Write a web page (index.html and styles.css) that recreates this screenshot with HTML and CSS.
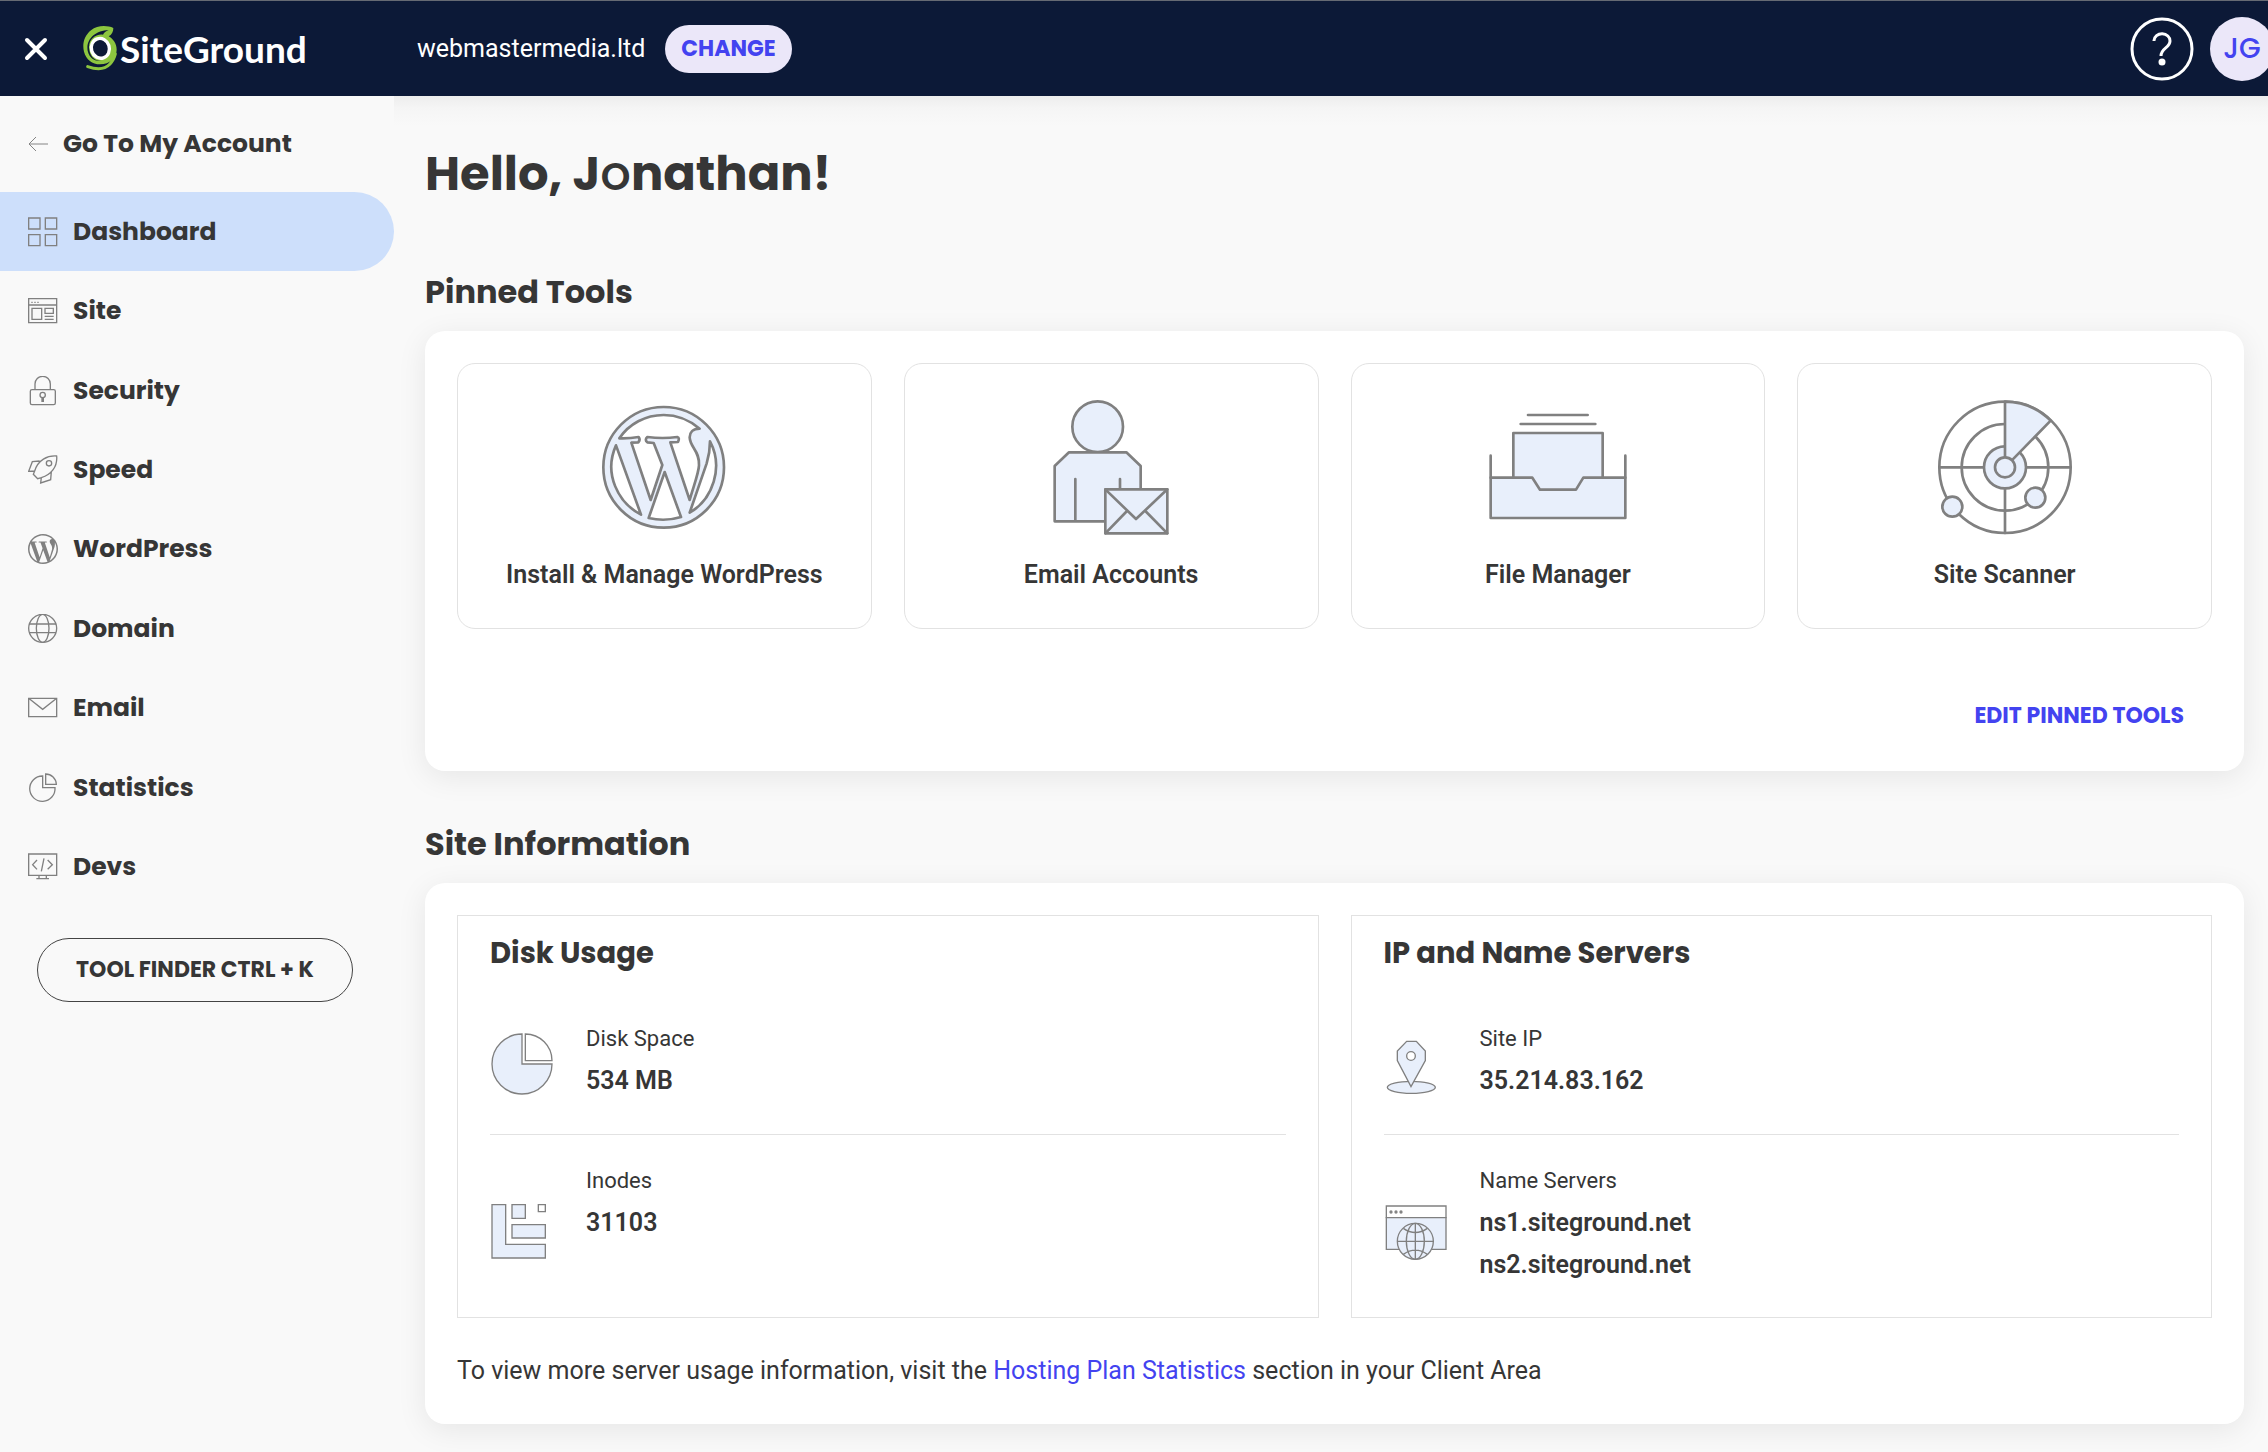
FILE: index.html
```html
<!DOCTYPE html>
<html lang="en">
<head>
<meta charset="utf-8">
<meta name="viewport" content="width=device-width, initial-scale=1">
<title>Dashboard – SiteGround</title>
<link rel="stylesheet" href="styles.css">
</head>
<body>
<header class="topbar">
  <div class="topbar-brand">
    <button class="icon-button close" type="button" aria-label="Close menu">
      <svg width="24" height="24" viewBox="0 0 24 24" fill="none" stroke="#fff" stroke-width="4" stroke-linecap="round"><path d="M3 3 21 21M21 3 3 21"/></svg>
    </button>
    <a class="logo" href="#">
      <svg width="35" height="48" viewBox="249 75 105 144" aria-hidden="true">
        <path fill="#8dc63f" fill-rule="evenodd" d="M340 84C322 76 292 75 273 91C253 107 246 132 252 155C258 179 277 193 300 193C330 193 350 172 350 149C350 130 339 117 326 109C335 104 340 96 340 84ZM326 91C317 94 312 98 309 104C288 101 266 117 267 143C268 167 284 183 304 183C288 185 268 176 263 152C257 119 286 91 326 91Z"/>
        <path fill="none" stroke="#8dc63f" stroke-width="9" stroke-linecap="round" d="M263 200C286 208 312 211 329 193Q342 180 346 162"/>
        <ellipse cx="301" cy="145" rx="27" ry="30" transform="rotate(-18 301 145)" fill="#0c1937" stroke="#fff" stroke-width="10"/>
      </svg>
      <span class="logo-text">SiteGround</span>
    </a>
  </div>
  <div class="topbar-site">
    <span>webmastermedia.ltd</span>
    <button class="change" type="button">CHANGE</button>
  </div>
  <div class="topbar-user">
    <button class="icon-button" type="button" aria-label="Help">
      <svg width="64" height="64" viewBox="0 0 64 64" fill="none" stroke="#fff" stroke-width="3"><circle cx="32" cy="32" r="30"/><path d="M24 24V23.500A8 7 0 0 1 40 24C40 31 31 31 31 39" stroke-linejoin="round"/><circle cx="32" cy="45" r="3.500" fill="#fff" stroke="none"/></svg>
    </button>
    <button class="avatar" type="button">JG</button>
  </div>
</header>

<div class="layout">
  <aside class="sidebar">
    <a class="back" href="#">
      <svg width="20" height="16" viewBox="0 0 20 16" fill="none" stroke="#848484"><path d="M20 8H1M8 1 1 8l7 7"/></svg>
      Go To My Account
    </a>
    <nav class="nav">
      <a class="nav-item active" href="#">
        <svg viewBox="84 650 90 90"><path d="M86 653h34v33H86zM136 653h34v33h-34zM86 703h34v33H86zM136 703h34v33h-34z"/></svg>
        Dashboard</a>
      <a class="nav-item" href="#">
        <svg viewBox="84 78 90 90"><path d="M86 86h84v72H86zM86 105h84M96 115h29v33H96zM135 115h25v15h-25zM134 139h27M134 148h27"/><path d="M94 97h4M103 97h4M112 97h4"/></svg>
        Site</a>
      <a class="nav-item" href="#">
        <svg viewBox="84 317 90 90"><rect x="91" y="358" width="75" height="45" rx="5"/><path d="M105 358V341a23 23 0 0 1 46 0V358"/><circle cx="128" cy="374" r="8"/><path d="M126 382v11h4v-11"/></svg>
        Security</a>
      <a class="nav-item" href="#">
        <svg viewBox="84 555 90 90"><path d="M170 558C142 556 114 570 104 603L100 613 113 626 124 623C154 614 173 590 170 558ZM119 573 97 575 86 604 104 603M154 604 152 629 122 639 124 623"/><circle cx="147" cy="580" r="8"/></svg>
        Speed</a>
      <a class="nav-item" href="#">
        <svg class="solid" viewBox="0 0 24 24"><path d="M21.469 6.825c.84 1.537 1.318 3.3 1.318 5.175 0 3.979-2.156 7.456-5.363 9.325l3.295-9.527c.615-1.54.82-2.771.82-3.864 0-.405-.026-.78-.07-1.110m-7.981.105c.647-.03 1.232-.105 1.232-.105.582-.075.514-.93-.067-.899 0 0-1.755.135-2.88.135-1.064 0-2.850-.15-2.850-.15-.585-.03-.661.855-.075.885 0 0 .54.061 1.125.09l1.680 4.605-2.370 7.080L5.354 6.900c.649-.03 1.234-.1 1.234-.1.585-.075.516-.93-.065-.896 0 0-1.746.138-2.874.138-.2 0-.438-.008-.69-.015C4.911 3.150 8.235 1.215 12 1.215c2.809 0 5.365 1.072 7.286 2.833-.046-.003-.091-.009-.141-.009-1.060 0-1.812.923-1.812 1.914 0 .89.513 1.643 1.060 2.531.411.72.89 1.643.89 2.977 0 .915-.354 1.994-.821 3.479l-1.075 3.585-3.900-11.610.001.014zM12 22.784c-1.059 0-2.081-.153-3.048-.437l3.237-9.406 3.315 9.087c.024.053.05.101.078.149-1.120.393-2.325.609-3.582.609M1.211 12c0-1.564.336-3.050.935-4.390L7.290 21.709C3.694 19.960 1.212 16.271 1.211 12M12 0C5.385 0 0 5.385 0 12s5.385 12 12 12 12-5.385 12-12S18.615 0 12 0"/></svg>
        WordPress</a>
      <a class="nav-item" href="#">
        <svg viewBox="84 72 90 90"><circle cx="128" cy="115" r="42"/><ellipse cx="128" cy="115" rx="19" ry="42"/><path d="M88 102h80M88 128h80"/></svg>
        Domain</a>
      <a class="nav-item" href="#">
        <svg viewBox="84 310 90 90"><path d="M86 326h84v55H86zM86 326l42 33 42-33"/></svg>
        Email</a>
      <a class="nav-item" href="#">
        <svg viewBox="84 548 90 90"><path d="M128 557A38 38 0 1 0 165 592H128ZM137 551V582H169A32 32 0 0 0 137 551Z"/></svg>
        Statistics</a>
      <a class="nav-item" href="#">
        <svg viewBox="84 787 90 90"><path d="M86 793h84v64H86zM117 857v9M139 857v9M109 867h38M111 811 98 825l13 14M143 811l14 14-14 14M132 806l-8 39"/></svg>
        Devs</a>
    </nav>
    <button class="tool-finder" type="button">TOOL FINDER CTRL + K</button>
  </aside>

  <main class="main">
    <h1>Hello, J<span class="light">o</span>nathan!</h1>

    <section>
      <h2>Pinned Tools</h2>
      <div class="panel pinned">
        <div class="tiles">
          <a class="tile" href="#">
            <svg viewBox="530 240 408 408"><circle class="fill" cx="733" cy="442" r="181"/>
              <g class="paper"><path d="M600 355C629 312 678 285 733 285C774 285 810 300 841 326C820 326 811 338 811 352C812 382 842 393 839 436C838 460 822 500 811 540L753 367L776 366Q782 353 774 351Q730 357 684 351Q675 359 684 367L703 369L729 435L694 540L636 368L657 367Q664 359 658 351Q630 356 600 355Z"/><path d="M590 376 665 584C596 548 552 461 590 376Z"/><path d="M736 456 785 591Q737 606 688 594Z"/><path d="M872 364C913 441 881 538 811 578L862 430Q872 398 872 364Z"/></g></svg>
            Install &amp; Manage WordPress</a>
          <a class="tile" href="#">
            <svg viewBox="130 60 408 408"><circle class="fill" cx="294" cy="140" r="76"/><path class="fill" d="M208 217H380L423 258V424H165V258Z"/><path d="M227 297V420M361 297V325"/><path class="fill" d="M317 328H503V460H317Z"/><path d="M317 328 409 417 503 328M317 460 382 393M503 460 437 393"/></svg>
            Email Accounts</a>
          <a class="tile" href="#">
            <svg viewBox="151 60 408 408"><path d="M265 105H444M243 132H467"/><path class="fill" d="M153 293H557V414H153Z"/><path class="fill" d="M221 293V159H489V293H431L409 329H301L278 293Z"/><path d="M153 227V293M557 227V293"/></svg>
            File Manager</a>
          <a class="tile" href="#">
            <svg viewBox="172 150 408 408"><circle cx="376" cy="352" r="197"/><circle cx="376" cy="352" r="130"/><path d="M179 352H573M376 352V549"/><circle class="fill" cx="376" cy="352" r="63"/><path class="fill" d="M376 352V155A197 197 0 0 1 513 212Z"/><circle class="fill" cx="376" cy="352" r="30"/><circle class="fill" cx="467" cy="443" r="30"/><circle class="fill" cx="218" cy="470" r="30"/></svg>
            Site Scanner</a>
        </div>
        <button class="edit" type="button">EDIT PINNED TOOLS</button>
      </div>
    </section>

    <section>
      <h2>Site Information</h2>
      <div class="panel info">
        <div class="cards">
          <article class="card">
            <h3>Disk Usage</h3>
            <div class="item">
              <svg viewBox="150 390 192 228"><path class="fill" d="M246 426A90 90 0 1 0 336 516H246Z"/><path d="M256 426V506H336A80 80 0 0 0 256 426Z"/></svg>
              <dl><dt>Disk Space</dt><dd>534 MB</dd></dl>
            </div>
            <div class="item">
              <svg viewBox="150 879 192 228"><path class="fill" d="M156 938H197V1057H316V1098H156ZM216 938H256V979H216ZM216 998H316V1038H216Z"/><path d="M295 938H316V959H295Z"/></svg>
              <dl><dt>Inodes</dt><dd>31103</dd></dl>
            </div>
          </article>
          <article class="card">
            <h3>IP and Name Servers</h3>
            <div class="item">
              <svg viewBox="159 390 192 228"><ellipse class="fill" cx="241" cy="586" rx="72" ry="18"/><path class="fill" d="M227 448H256L283 477V506L240 584 199 506V477Z"/><circle cx="240" cy="492" r="13" fill="#fff"/></svg>
              <dl><dt>Site IP</dt><dd>35.214.83.162</dd></dl>
            </div>
            <div class="item">
              <svg viewBox="159 879 192 228"><path d="M166 942H345V977H166Z"/><path class="fill" d="M166 977H345V1072H166Z"/><circle class="fill" cx="253" cy="1048" r="54"/><path d="M253 994V1102M199 1048H307M217 1009Q253 1034 289 1009M217 1087Q253 1062 289 1087"/><ellipse cx="253" cy="1048" rx="27" ry="54"/><g fill="#848484" stroke="none"><circle cx="180" cy="960" r="5"/><circle cx="195" cy="960" r="5"/><circle cx="210" cy="960" r="5"/></g></svg>
              <dl><dt>Name Servers</dt><dd>ns1.siteground.net</dd><dd>ns2.siteground.net</dd></dl>
            </div>
          </article>
        </div>
        <p>To view more server usage information, visit the <a href="#">Hosting Plan Statistics</a> section in your Client Area</p>
      </div>
    </section>
  </main>
</div>
</body>
</html>
```
FILE: styles.css
```css
:root {
  --display: Poppins, Inter, sans-serif;
  --text: Roboto, sans-serif;
  --ink: #363636;
  --navy: #0c1937;
  --accent: #4343f0;
  --lavender: #ebe7f9;
  --page: #f9f9f9;
  --line: #e2e2e2;
  --icon: #808080;
  --icon-fill: #e8effb;
}

* { box-sizing: border-box; }

body {
  margin: 0;
  overflow-x: hidden;
  background: var(--page);
  color: var(--ink);
  font: 25px/32px var(--text);
}

a { color: inherit; text-decoration: none; }
button { padding: 0; border: 0; background: none; color: inherit; cursor: pointer; }
svg { display: block; flex: none; }
h1, h2, h3, p, dl, dd { margin: 0; }
h1, h2, h3 { font-family: var(--display); font-weight: 700; }

/* Top bar */
.topbar {
  display: flex;
  align-items: center;
  height: 96px;
  overflow: hidden;
  border-top: 1px solid #666a73;
  background: var(--navy);
  color: #fff;
}
.topbar-brand {
  display: flex;
  align-items: center;
  gap: 35px;
  width: 417px;
  padding-left: 24px;
}
.logo { display: flex; align-items: center; gap: 2px; }
.logo-text { font: 700 37px/48px Lato, sans-serif; }
.topbar-site { display: flex; align-items: center; gap: 20px; }
.change {
  height: 48px;
  padding: 0 16px;
  border-radius: 24px;
  background: var(--lavender);
  color: var(--accent);
  font: 700 22px/32px var(--display);
}
.topbar-user { display: flex; gap: 16px; margin: 0 -6px 0 auto; }
.avatar {
  width: 64px;
  height: 64px;
  border-radius: 50%;
  background: var(--lavender);
  color: var(--accent);
  font: 500 28px/32px var(--display);
}

/* Page layout */
.layout { display: grid; grid-template-columns: 394px minmax(0, 1fr); }

.sidebar { padding-bottom: 32px; }
.back {
  display: flex;
  align-items: center;
  gap: 15px;
  height: 96px;
  padding-left: 28px;
  font: 700 25px/32px var(--display);
}
.nav { display: grid; grid-auto-rows: 1fr; min-height: 715px; }
.nav-item {
  display: flex;
  align-items: center;
  gap: 15px;
  padding-left: 28px;
  border-radius: 0 40px 40px 0;
  font: 700 25px/32px var(--display);
}
.nav-item.active { background: #cddffb; }
.nav-item svg {
  width: 30px;
  height: 30px;
  fill: none;
  stroke: var(--icon);
  stroke-width: 4;
}
.nav-item .solid { fill: var(--icon); stroke: none; }
.tool-finder {
  display: block;
  width: 316px;
  height: 64px;
  margin: 31px 0 0 37px;
  border: 1px solid #444;
  border-radius: 32px;
  font: 700 22px/32px var(--display);
}

.main {
  padding: 45px 24px 29px 31px;
  background: linear-gradient(#ededed, #f5f5f5 12px, var(--page) 30px);
}
h1 { margin-bottom: 63px; font-size: 48px; line-height: 66px; }
h1 .light { font-weight: 500; }
h2 { margin-bottom: 17px; font-size: 32px; line-height: 44px; }
section + section { margin-top: 51px; }

.panel {
  border-radius: 20px;
  background: #fff;
  box-shadow: 0 6px 30px rgba(0, 0, 0, .08);
}

/* Pinned tools */
.pinned { display: flex; flex-direction: column; padding: 32px 32px 25px; }
.tiles { display: grid; grid-template-columns: repeat(4, minmax(0, 1fr)); gap: 32px; }
.tile {
  display: flex;
  flex-direction: column;
  align-items: center;
  gap: 23px;
  padding: 36px 16px 37px;
  border: 1px solid var(--line);
  border-radius: 18px;
  font-weight: 600;
}
.tile svg {
  width: 136px;
  height: 136px;
  overflow: visible;
  fill: none;
  stroke: var(--icon);
  stroke-width: 8;
  stroke-linecap: round;
  stroke-linejoin: round;
}
.fill { fill: var(--icon-fill); }
.paper { fill: #fff; }
.edit {
  align-self: flex-end;
  height: 60px;
  margin-top: 57px;
  padding: 0 28px;
  color: var(--accent);
  font: 700 22px/32px var(--display);
}

/* Site information */
.info { padding: 32px 32px 37px; }
.cards { display: grid; grid-template-columns: repeat(2, minmax(0, 1fr)); gap: 32px; margin-bottom: 37px; }
.card { display: flex; flex-direction: column; padding: 19px 32px 0; border: 1px solid var(--line); }
h3 { margin-bottom: 22px; font-size: 29px; line-height: 36px; }
.item { display: flex; gap: 32px; padding: 25px 0 32px; }
.item + .item { flex: 1; padding-bottom: 31px; border-top: 1px solid var(--line); }
.item svg {
  align-self: center;
  width: 64px;
  height: 76px;
  fill: none;
  stroke: var(--icon);
  stroke-width: 4;
}
.item .fill { fill: var(--icon-fill); }
dt { font-size: 22px; line-height: 42px; }
dd { font-weight: 600; line-height: 42px; }
.info p a { color: var(--accent); }
```
